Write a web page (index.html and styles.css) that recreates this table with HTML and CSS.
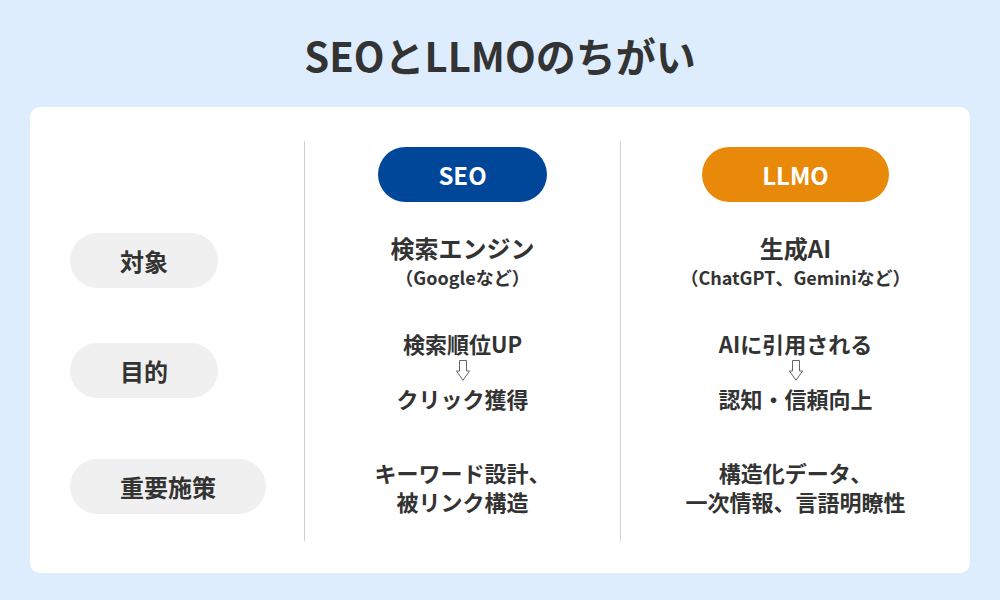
FILE: index.html
```html
<!DOCTYPE html>
<html lang="ja">
<head>
<meta charset="utf-8">
<title>SEOとLLMOのちがい</title>
<link rel="stylesheet" href="styles.css">
</head>
<body>
<div class="page">
  <h1 class="title">SEOとLLMOのちがい</h1>
  <div class="card">
    <div class="cell-label"></div>
    <div class="cell"><span class="badge badge-seo">SEO</span></div>
    <div class="cell"><span class="badge badge-llmo">LLMO</span></div>

    <div class="cell-label"><span class="label">対象</span></div>
    <div class="cell">
      <div class="main">検索エンジン</div>
      <div class="sub">（Googleなど）</div>
    </div>
    <div class="cell">
      <div class="main">生成AI</div>
      <div class="sub">（ChatGPT、Geminiなど）</div>
    </div>

    <div class="cell-label"><span class="label">目的</span></div>
    <div class="cell">
      <div class="line">検索順位UP</div>
      <div class="arrow"><svg width="14" height="21" viewBox="0 0 14 21"><path d="M3.5 0.5 H10.5 V11 H13.5 L7 20.3 L0.5 11 H3.5 Z" fill="none" stroke="#666" stroke-width="1" stroke-linejoin="miter"/></svg></div>
      <div class="line">クリック獲得</div>
    </div>
    <div class="cell">
      <div class="line">AIに引用される</div>
      <div class="arrow"><svg width="14" height="21" viewBox="0 0 14 21"><path d="M3.5 0.5 H10.5 V11 H13.5 L7 20.3 L0.5 11 H3.5 Z" fill="none" stroke="#666" stroke-width="1" stroke-linejoin="miter"/></svg></div>
      <div class="line">認知・信頼向上</div>
    </div>

    <div class="cell-label last"><span class="label">重要施策</span></div>
    <div class="cell last">
      <div class="line">キーワード設計、</div>
      <div class="line">被リンク構造</div>
    </div>
    <div class="cell last">
      <div class="line">構造化データ、</div>
      <div class="line">一次情報、言語明瞭性</div>
    </div>
  </div>
</div>
</body>
</html>
```
FILE: styles.css
```css
html, body {
  margin: 0;
  padding: 0;
}
body {
  background: #deedfd;
  color: #333333;
  font-family: "Noto Sans CJK JP", "Noto Sans", sans-serif;
  width: 1000px;
  height: 600px;
  overflow: hidden;
}
.page {
  padding: 27px 30px 0;
}
.title {
  margin: 0 0 24px;
  font-size: 40px;
  line-height: 56px;
  font-weight: 700;
  text-align: center;
  color: #333333;
}
.card {
  background: #ffffff;
  border-radius: 10px;
  padding: 34px 0 32px 40px;
  display: grid;
  grid-template-columns: 234px 316px 350px;
  grid-template-rows: 67px 105px 115px 113px;
}
.cell-label {
  display: flex;
  align-items: center;
}
.cell {
  display: flex;
  flex-direction: column;
  align-items: center;
  justify-content: center;
  border-left: 1px solid #cfcfcf;
  text-align: center;
  font-weight: 700;
}
.last {
  padding-top: 4px;
}
.badge {
  display: inline-flex;
  align-items: center;
  height: 55px;
  padding: 0 60px;
  border-radius: 28px;
  color: #ffffff;
  font-size: 24px;
  font-weight: 700;
}
.badge-seo {
  background: #00479a;
}
.badge-llmo {
  background: #e8890a;
}
.label {
  display: inline-flex;
  align-items: center;
  height: 55px;
  padding: 0 50px;
  border-radius: 28px;
  background: #f0f0f0;
  font-size: 24px;
  font-weight: 700;
  color: #333333;
}
.main {
  font-size: 24px;
  line-height: 32px;
}
.sub {
  font-size: 18px;
  line-height: 26px;
}
.line {
  font-size: 22px;
  line-height: 29px;
}
.arrow {
  height: 26px;
  display: flex;
  align-items: center;
  justify-content: center;
}
.arrow svg {
  display: block;
}
```
